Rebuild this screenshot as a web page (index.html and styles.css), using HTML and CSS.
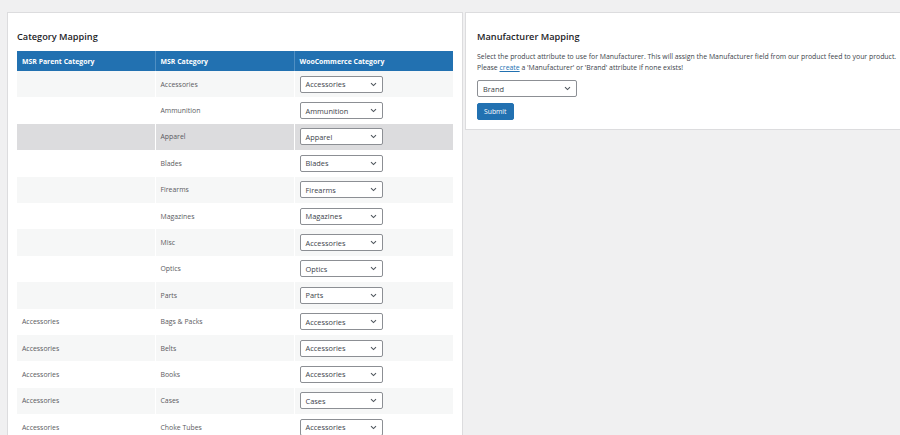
FILE: index.html
```html
<!DOCTYPE html>
<html>
<head>
<meta charset="utf-8">
<link rel="stylesheet" href="styles.css">
</head>
<body>
<div class="page">
  <div class="card card-left">
    <h2 class="card-title">Category Mapping</h2>
    <table class="map-table">
      <colgroup><col class="w1"><col class="w2"><col></colgroup>
      <thead>
        <tr><th>MSR Parent Category</th><th>MSR Category</th><th>WooCommerce Category</th></tr>
      </thead>
      <tbody id="rows"></tbody>
    </table>
  </div>
  <div class="card card-right">
    <h2 class="card-title">Manufacturer Mapping</h2>
    <p class="desc">Select the product attribute to use for Manufacturer. This will assign the Manufacturer field from our product feed to your product.<br>Please <a href="#" class="link">create</a> a 'Manufacturer' or 'Brand' attribute if none exists!</p>
    <div class="select select-wide"><span>Brand</span><svg class="chev" width="7" height="5" viewBox="0 0 7 5"><path d="M1 1.2 L3.5 3.6 L6 1.2" fill="none" stroke="#50575e" stroke-width="1.1"/></svg></div>
    <button class="btn">Submit</button>
  </div>
</div>
<script src="app.js"></script>
</body>
</html>
```
FILE: app.js
```js
var data = [
  ["", "Accessories", "Accessories"],
  ["", "Ammunition", "Ammunition"],
  ["", "Apparel", "Apparel", "hover"],
  ["", "Blades", "Blades"],
  ["", "Firearms", "Firearms"],
  ["", "Magazines", "Magazines"],
  ["", "Misc", "Accessories"],
  ["", "Optics", "Optics"],
  ["", "Parts", "Parts"],
  ["Accessories", "Bags & Packs", "Accessories"],
  ["Accessories", "Belts", "Accessories"],
  ["Accessories", "Books", "Accessories"],
  ["Accessories", "Cases", "Cases"],
  ["Accessories", "Choke Tubes", "Accessories"]
];
var tb = document.getElementById("rows");
data.forEach(function (r) {
  var tr = document.createElement("tr");
  if (r[3]) tr.className = "hover";
  var td1 = document.createElement("td"); td1.textContent = r[0];
  var td2 = document.createElement("td"); td2.textContent = r[1];
  var td3 = document.createElement("td");
  td3.innerHTML = '<div class="select"><span></span><svg class="chev" width="7" height="5" viewBox="0 0 7 5"><path d="M1 1.2 L3.5 3.6 L6 1.2" fill="none" stroke="#50575e" stroke-width="1.1"/></svg></div>';
  td3.querySelector("span").textContent = r[2];
  tr.appendChild(td1); tr.appendChild(td2); tr.appendChild(td3);
  tb.appendChild(tr);
});
```
FILE: styles.css
```css
html, body {
  margin: 0;
  padding: 0;
  background: #f0f0f1;
  font-family: "Open Sans", "Noto Sans", sans-serif;
  color: #3c434a;
  overflow: hidden;
  height: 435px;
}
.page {
  display: flex;
  align-items: flex-start;
  gap: 2px;
  padding: 12px 0 0 7px;
  width: 1000px;
}
.card {
  background: #fff;
  border: 1px solid #dcdcde;
  box-sizing: border-box;
}
.card-left {
  width: 456px;
  padding: 0 9px 20px;
  height: 500px;
}
.card-right {
  flex: 1;
  padding: 0 11px 9px;
}
.card-title {
  margin: 0;
  font-size: 9.2px;
  font-weight: 600;
  color: #1d2327;
  line-height: 12px;
  padding-top: 18px;
}
.card-left .card-title { padding-bottom: 8px; }
.map-table {
  width: 436px;
  border-collapse: collapse;
  table-layout: fixed;
  font-size: 6.9px;
}
.map-table col.w1 { width: 138px; }
.map-table col.w2 { width: 139px; }
.map-table th {
  background: #2271b1;
  color: #fff;
  font-weight: 700;
  text-align: left;
  height: 20px;
  padding: 0 5px;
  border-left: 1px solid #4f8fc3;
}
.map-table th:first-child, .map-table td:first-child { border-left: none; }
.map-table td {
  height: 26.4px;
  padding: 0 5px;
  color: #5a5a5e;
  border-left: 1px solid #fff;
  box-sizing: border-box;
}
.map-table tbody tr:nth-child(odd) td { background: #f6f7f7; }
.map-table tbody tr.hover td { background: #dcdcde; }
.select {
  box-sizing: border-box;
  width: 83px;
  height: 17px;
  border: 1px solid #8c8f94;
  border-radius: 2px;
  background: #fff;
  display: flex;
  align-items: center;
  justify-content: space-between;
  padding: 0 5px 0 5px;
  font-size: 7.4px;
  color: #3c434a;
}
.select-wide {
  width: 100px;
  margin-top: 7px;
}
.chev { display: block; }
.desc {
  margin: 8px 0 0;
  font-size: 6.9px;
  line-height: 11px;
  color: #3c434a;
}
.link { color: #2271b1; text-decoration: underline; }
.btn {
  display: block;
  margin-top: 6px;
  height: 17px;
  padding: 0 6px;
  background: #2271b1;
  border: 1px solid #2271b1;
  border-radius: 2px;
  color: #fff;
  font-family: "Open Sans", "Noto Sans", sans-serif;
  font-size: 6.8px;
}
```
